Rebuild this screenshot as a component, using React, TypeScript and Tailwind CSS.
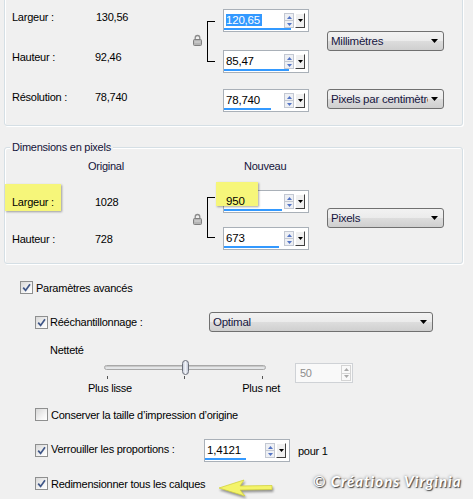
import React from 'react';

const groupBox =
  'ml-[4px] w-[459px] rounded-[3px] border border-[#d5dfe5] pl-[7px] shadow-[inset_1px_1px_0_#ffffff,1px_1px_0_#ffffff]';

const Lock = () => (
  <svg width="9" height="12" viewBox="0 0 9 12">
    <path d="M2.2 6V3.8a2.3 2.3 0 0 1 4.6 0V6" fill="none" stroke="#8c8c8c" strokeWidth="1.3" />
    <rect x="0.5" y="5.5" width="8" height="6" rx="1" fill="#b4b4b4" stroke="#808080" />
    <rect x="1.5" y="7.5" width="6" height="1" fill="#d8d8d8" />
  </svg>
);

const Triangle = ({ up, color = '#000' }: { up?: boolean; color?: string }) => (
  <svg width="7" height="4" viewBox="0 0 7 4" className="shrink-0">
    <path d={up ? 'M0 4h7L3.5 0z' : 'M0 0h7L3.5 4z'} fill={color} />
  </svg>
);

const SmallArrow = ({ up, color }: { up?: boolean; color: string }) => (
  <svg width="5" height="3" viewBox="0 0 5 3">
    <path d={up ? 'M0 3h5L2.5 0z' : 'M0 0h5L2.5 3z'} fill={color} />
  </svg>
);

const Check = ({ checked }: { checked?: boolean }) => (
  <span className="flex h-[13px] w-[13px] shrink-0 items-center justify-center border border-[#8e8f8f] bg-[linear-gradient(135deg,#d8d8d8,#f7f7f7_70%,#ffffff)]">
    {checked && (
      <svg width="9" height="9" viewBox="0 0 9 9">
        <path d="M1.2 4.6 L3.6 7.4 L8 1.2" fill="none" stroke="#3f5687" strokeWidth="1.7" />
      </svg>
    )}
  </span>
);

const Combo = ({ label, className }: { label: string; className: string }) => (
  <div
    className={`flex h-[20px] items-center rounded-[3px] border border-[#707070] bg-[linear-gradient(#f2f2f2,#ebebeb_50%,#dddddd_50%,#cfcfcf)] pl-[3px] pr-[5px] text-[11.5px] text-[#16163f] ${className}`}
  >
    <span className="mr-[3px] min-w-0 flex-1 overflow-hidden whitespace-nowrap">{label}</span>
    <Triangle />
  </div>
);

type SpinProps = {
  value: string;
  bar: number;
  selected?: boolean;
  highlight?: boolean;
  className?: string;
};

const SpinBox = ({ value, bar, selected, highlight, className = 'w-[86px]' }: SpinProps) => (
  <div className={`relative flex h-[23px] border border-[#a9b0b8] bg-white ${className}`}>
    {highlight && (
      <div className="absolute left-[-8px] top-[-9px] h-[24px] w-[42px] bg-[#f6f67a] shadow-[1px_1px_2px_rgba(0,0,0,0.35)]" />
    )}
    <div className="relative flex min-w-0 flex-1 flex-col">
      <div className="flex flex-1">
        <div className="flex-1 pl-[2px] pt-[3px] text-[11.5px] leading-[15px] tracking-[-0.2px]">
          <span className={selected ? 'bg-[#3399ff] pr-[2px] text-white' : 'text-black'}>{value}</span>
        </div>
        <div className="mt-[3px] flex h-[15px] w-[10px] flex-col border border-[#c3c8d2] bg-[#eef0f4]">
          <span className="flex flex-1 items-center justify-center border-b border-[#c3c8d2]">
            <SmallArrow up color="#5474c4" />
          </span>
          <span className="flex flex-1 items-center justify-center">
            <SmallArrow color="#5474c4" />
          </span>
        </div>
      </div>
      <div className="mb-[1px] h-[3px] bg-[#3399ff]" style={{ width: bar }} />
    </div>
    <div className="my-[3px] ml-[1px] mr-[3px] flex w-[10px] items-center justify-center border-r border-b border-[#404040] border-t border-l border-t-white border-l-white bg-[#f0f0f0]">
      <svg width="5" height="3" viewBox="0 0 5 3">
        <path d="M0 0h5L2.5 3z" fill="#000" />
      </svg>
    </div>
  </div>
);

export default function App() {
  return (
    <div className="h-[499px] w-[473px] overflow-hidden bg-[#f0f0f0] font-['Liberation_Sans',Arial,sans-serif] text-[11px] leading-[14px] tracking-[-0.25px] text-black">
      {/* Dimensions d'impression */}
      <div className={`${groupBox} -mt-[3px] pb-[13px] pt-[11px]`}>
        <div className="grid grid-cols-[83px_98px_14px_16px_85px_136px] grid-rows-[23px_18px_23px_16px_23px]">
          <span className="col-start-1 row-start-1 pt-[1px]">Largeur :</span>
          <span className="col-start-2 row-start-1 pt-[1px] pl-[1px]">130,56</span>
          <span className="col-start-1 row-start-3">Hauteur :</span>
          <span className="col-start-2 row-start-3">92,46</span>
          <span className="col-start-1 row-start-5 pt-[1px]">Résolution :</span>
          <span className="col-start-2 row-start-5 pt-[1px]">78,740</span>

          <div className="col-start-3 row-span-3 row-start-1 flex items-center pb-[3px]">
            <Lock />
          </div>
          <div className="col-start-4 row-span-3 row-start-1 pt-[12px]">
            <div className="h-[41px] w-[8px] border-y border-l border-black" />
          </div>

          <div className="col-start-5 row-start-1">
            <SpinBox value="120,65" bar={67} selected />
          </div>
          <div className="col-start-5 row-start-3">
            <SpinBox value="85,47" bar={65} />
          </div>
          <div className="col-start-5 row-start-5">
            <SpinBox value="78,740" bar={47} />
          </div>

          <Combo label="Millimètres" className="col-start-6 row-span-3 row-start-1 w-[117px] self-center justify-self-end" />
          <Combo label="Pixels par centimètre" className="col-start-6 row-start-5 w-[117px] self-start justify-self-end" />
        </div>
      </div>

      {/* Dimensions en pixels */}
      <div className={`${groupBox} mt-[21px] pb-[13px]`}>
        <div className="-mt-[8px] ml-[-2px] w-fit bg-[#f0f0f0] px-[2px] text-[#14143a]">Dimensions en pixels</div>
        <div className="mt-[5px] grid grid-cols-[83px_98px_14px_16px_85px_136px] grid-rows-[14px_17px_23px_14px_23px]">
          <span className="col-start-2 row-start-1 ml-[-7px] text-[#14143a]">Original</span>
          <span className="col-start-5 row-start-1 ml-[21px] text-[#14143a]">Nouveau</span>

          <span className="col-start-1 row-start-3 self-center">
            <span className="relative inline-block">
              <span className="absolute left-[-7px] top-[-11px] h-[27px] w-[56px] bg-[#f6f67a] shadow-[1px_1px_2px_rgba(0,0,0,0.35)]" />
              <span className="relative">Largeur :</span>
            </span>
          </span>
          <span className="col-start-2 row-start-3 self-center">1028</span>
          <span className="col-start-1 row-start-5 self-center">Hauteur :</span>
          <span className="col-start-2 row-start-5 self-center">728</span>

          <div className="col-start-3 row-span-3 row-start-3 flex items-center pb-[2px]">
            <Lock />
          </div>
          <div className="col-start-4 row-span-3 row-start-3 pt-[7px]">
            <div className="h-[41px] w-[8px] border-y border-l border-black" />
          </div>

          <div className="col-start-5 row-start-3">
            <SpinBox value="950" bar={58} highlight />
          </div>
          <div className="col-start-5 row-start-5">
            <SpinBox value="673" bar={55} />
          </div>

          <Combo label="Pixels" className="col-start-6 row-span-3 row-start-3 mb-[4px] w-[117px] self-center justify-self-end" />
        </div>
      </div>

      {/* Paramètres avancés */}
      <label className="ml-[20px] mt-[17px] flex h-[13px] items-center gap-[3px]">
        <Check checked />
        Paramètres avancés
      </label>

      <div className="ml-[35px] mt-[18px] flex h-[20px] items-center">
        <Check checked />
        <span className="w-[161px] pl-[2px]">Rééchantillonnage :</span>
        <Combo label="Optimal" className="w-[224px]" />
      </div>

      <div className="ml-[50px] mt-[11px]">Netteté</div>

      <div className="ml-[88px] mt-[2px] flex">
        <div className="relative w-[192px]">
          <div className="ml-[16px] mt-[6px] h-[5px] w-[162px] rounded-full border border-[#a8a8a8] bg-[#e4e6e8] shadow-[inset_0_1px_0_#c8c8c8]" />
          <div className="absolute left-[94px] top-[1px] h-[15px] w-[7px] rounded-full border border-[#6b6f7a] bg-[linear-gradient(90deg,#c9cfdc,#f1f3f8_50%,#c2c8d6)]" />
          <div className="absolute left-[19px] top-[17px] h-[3px] w-px bg-[#555]" />
          <div className="absolute left-[96px] top-[17px] h-[3px] w-px bg-[#555]" />
          <div className="absolute left-[174px] top-[17px] h-[3px] w-px bg-[#555]" />
          <div className="mt-[11px] flex justify-between">
            <span>Plus lisse</span>
            <span>Plus net</span>
          </div>
        </div>
        <div className="ml-[15px] mt-[4px] flex h-[20px] w-[58px] border border-[#cfd2d6] bg-[#f9f9f9]">
          <span className="flex-1 pl-[4px] pt-[2px] text-[#8d8d8d]">50</span>
          <span className="my-[1px] mr-[1px] flex w-[10px] flex-col border border-[#d4d4d4]">
            <span className="flex flex-1 items-center justify-center border-b border-[#d4d4d4]">
              <SmallArrow up color="#a9a9a9" />
            </span>
            <span className="flex flex-1 items-center justify-center">
              <SmallArrow color="#a9a9a9" />
            </span>
          </span>
        </div>
      </div>

      <label className="ml-[35px] mt-[13px] flex h-[13px] items-center gap-[3px]">
        <Check />
        Conserver la taille d’impression d’origine
      </label>

      <div className="ml-[35px] mt-[18px] flex h-[23px] items-center">
        <Check checked />
        <span className="mb-[3px] w-[156px] pl-[3px]">Verrouiller les proportions :</span>
        <SpinBox value="1,4121" bar={41} className="w-[86px]" />
        <span className="ml-[8px] mt-[1px]">pour 1</span>
      </div>

      <div className="ml-[35px] mt-[15px] flex h-[13px] items-center">
        <Check checked />
        <span className="w-[170px] pl-[3px]">Redimensionner tous les calques</span>
        <svg
          width="56"
          height="20"
          viewBox="0 0 56 20"
          className="mt-[1px] self-start drop-shadow-[1px_2px_1px_rgba(0,0,0,0.4)]"
        >
          <path d="M1 10 L26 2 L22 8 L54 7.5 L54 11.5 L22 12 L27 18 Z" fill="#f4f46a" stroke="#d2d23c" strokeWidth="0.8" />
        </svg>
        <span className="ml-[39px] -mt-[5px] self-start whitespace-nowrap font-['Lato',sans-serif] text-[15px] font-bold italic leading-[18px] tracking-[1px] text-white [text-shadow:1px_1px_1px_#4a4a4a,0_0_3px_#777]">
          © Créations Virginia
        </span>
      </div>
    </div>
  );
}
